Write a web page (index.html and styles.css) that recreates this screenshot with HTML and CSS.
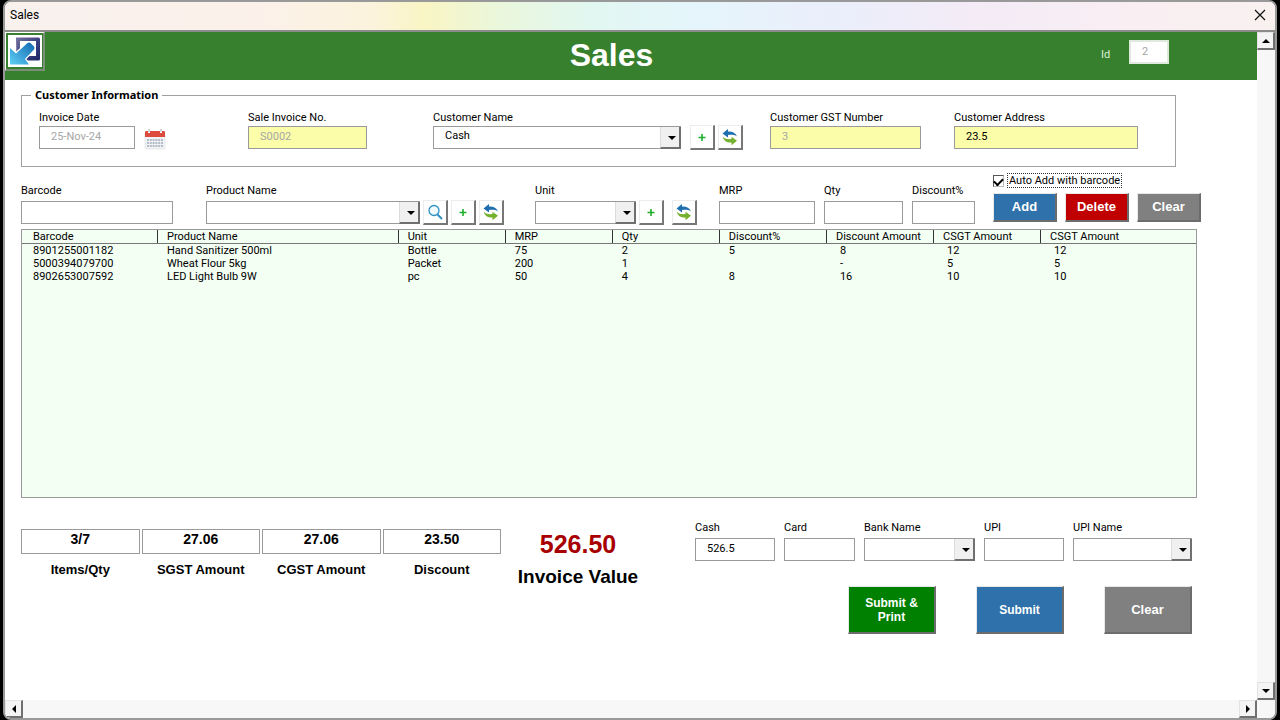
FILE: index.html
```html
<!DOCTYPE html>
<html lang="en">
<head>
<meta charset="utf-8">
<title>Sales</title>
<link rel="stylesheet" href="styles.css">
</head>
<body>
<svg class="defs" aria-hidden="true">
  <symbol id="refresh" viewBox="0 0 18 18">
    <path d="M1.500 5.500 7 1v2.400c4.600-.2 7.600 1.400 9 5C13.500 6.800 10.500 6.600 7 7v2.600z" fill="#1f6fae"/>
    <path d="M16 12.800 10.500 8.800v2.300c-4 .3-6.500-.2-8.700-2.400C2.600 12.800 6 14.800 10.500 14.600v2.600z" fill="#76b02f"/>
  </symbol>
  <symbol id="plus" viewBox="0 0 18 18">
    <path d="M9 6v7M5.500 9.500h7" stroke="#1fae2c" stroke-width="1.600"/>
  </symbol>
</svg>
<div class="window">
  <div class="titlebar">
    <span>Sales</span>
    <button class="close" type="button" aria-label="Close">
      <svg viewBox="0 0 12 12" width="12" height="12"><path d="M1 1l10 10M11 1L1 11" stroke="#111" stroke-width="1.200"/></svg>
    </button>
  </div>
  <div class="viewport">
    <form class="form">
      <header class="header">
        <button class="back" type="button" aria-label="Back">
          <svg viewBox="0 0 34 32" width="34" height="32">
            <defs>
              <linearGradient id="frame" x1="0" y1="0" x2="1" y2="1"><stop offset="0" stop-color="#77739f"/><stop offset=".5" stop-color="#3e4382"/><stop offset="1" stop-color="#1b2565"/></linearGradient>
              <linearGradient id="arrow" x1="1" y1="0" x2="0" y2="1"><stop offset="0" stop-color="#1268b0"/><stop offset="1" stop-color="#5fd0f5"/></linearGradient>
            </defs>
            <rect width="34" height="32" fill="#fff"/>
            <path d="M8 2.500h22.500a1.500 1.500 0 0 1 1.500 1.500v20a1.500 1.500 0 0 1-1.500 1.500H10a1.500 1.500 0 0 1-1.500-1.500zM12 6v15h16V6z" fill="url(#frame)" fill-rule="evenodd"/>
            <path d="M19.500 8q1.500-1 3 0l3.500 3.500q1 1.500 0 3L17 24l4 5.500H2V13l6 5.500z" fill="url(#arrow)" stroke="#fff" stroke-width="2.400" paint-order="stroke"/>
          </svg>
        </button>
        <h1 class="title">Sales</h1>
        <div class="record">
          <label for="rid">Id</label>
          <input id="rid" class="box record-id" value="2" disabled>
        </div>
      </header>

      <fieldset class="customer">
        <legend>Customer Information</legend>
        <div class="customer-fields">
          <div class="field">
            <label for="date">Invoice Date</label>
            <div class="line"><input id="date" class="box" value="25-Nov-24" disabled>
              <svg class="calendar" viewBox="0 0 22 22" width="22" height="22" role="img" aria-label="Calendar">
                <path d="M1 5h20v15a1 1 0 0 1-1 1H2a1 1 0 0 1-1-1z" fill="#f1f3f5" stroke="#dadddf" stroke-width=".6"/>
                <path d="M1 9V4q0-1 1-1h18q1 0 1 1v5z" fill="#dd4b3e"/>
                <path d="M5 1v4M17 1v4" stroke="#fff" stroke-width="2"/><path d="M5 1v3M17 1v3" stroke="#a8aaac" stroke-width="1"/>
                <path d="M3 12h16M3 15h16M3 18h16" stroke="#b3bcc8" stroke-width="2" stroke-dasharray="2 .8"/>
              </svg></div>
          </div>
          <div class="field">
            <label for="invno">Sale Invoice No.</label>
            <div class="line"><input id="invno" class="box yellow" value="S0002" disabled></div>
          </div>
          <div class="field">
            <label for="cust">Customer Name</label>
            <div class="line"><span class="drop"><select id="cust" class="box"><option>Cash</option></select></span>
              <button class="tool first" type="button" aria-label="Add customer"><svg><use href="#plus"/></svg></button>
              <button class="tool" type="button" aria-label="Refresh customers"><svg><use href="#refresh"/></svg></button></div>
          </div>
          <div class="field">
            <label for="gst">Customer GST Number</label>
            <div class="line"><input id="gst" class="box yellow" value="3" disabled></div>
          </div>
          <div class="field">
            <label for="addr">Customer Address</label>
            <div class="line"><input id="addr" class="box yellow" value="23.5"></div>
          </div>
        </div>
      </fieldset>

      <section class="entry">
        <div class="field">
          <label for="barcode">Barcode</label>
          <div class="line"><input id="barcode" class="box"></div>
        </div>
        <div class="field">
          <label for="product">Product Name</label>
          <div class="line"><span class="drop"><select id="product" class="box"><option></option></select></span>
            <button class="tool" type="button" aria-label="Search product"><svg viewBox="0 0 18 18"><circle cx="8" cy="7.500" r="5" fill="#f2fafd" stroke="#2f8fc0" stroke-width="1.300"/><path d="M11.500 11.500l4.500 4.500" stroke="#2f8fc0" stroke-width="2"/></svg></button>
            <button class="tool" type="button" aria-label="Add product"><svg><use href="#plus"/></svg></button>
            <button class="tool" type="button" aria-label="Refresh products"><svg><use href="#refresh"/></svg></button></div>
        </div>
        <div class="field">
          <label for="unit">Unit</label>
          <div class="line"><span class="drop"><select id="unit" class="box"><option></option></select></span>
            <button class="tool" type="button" aria-label="Add unit"><svg><use href="#plus"/></svg></button>
            <button class="tool apart" type="button" aria-label="Refresh units"><svg><use href="#refresh"/></svg></button></div>
        </div>
        <div class="field">
          <label for="mrp">MRP</label>
          <div class="line"><input id="mrp" class="box"></div>
        </div>
        <div class="field">
          <label for="qty">Qty</label>
          <div class="line"><input id="qty" class="box"></div>
        </div>
        <div class="field">
          <label for="disc">Discount%</label>
          <div class="line"><input id="disc" class="box"></div>
        </div>
        <div class="actions">
          <div class="auto">
            <input id="auto" type="checkbox" checked>
            <label for="auto">Auto Add with barcode</label>
          </div>
          <div class="action-row">
            <button class="btn blue" type="button">Add</button>
            <button class="btn red" type="button">Delete</button>
            <button class="btn gray" type="button">Clear</button>
          </div>
        </div>
      </section>

      <div class="list">
        <table>
          <thead>
            <tr><th class="code"><span>Barcode</span></th><th class="name"><span>Product Name</span></th><th class="std"><span>Unit</span></th><th class="std"><span>MRP</span></th><th class="std"><span>Qty</span></th><th class="std"><span>Discount%</span></th><th class="std"><span>Discount Amount</span></th><th class="std"><span>CSGT Amount</span></th><th><span>CSGT Amount</span></th></tr>
          </thead>
          <tbody>
            <tr><td>8901255001182</td><td>Hand Sanitizer 500ml</td><td>Bottle</td><td>75</td><td>2</td><td>5</td><td class="amount">8</td><td class="amount">12</td><td class="amount">12</td></tr>
            <tr><td>5000394079700</td><td>Wheat Flour 5kg</td><td>Packet</td><td>200</td><td>1</td><td></td><td class="amount">-</td><td class="amount">5</td><td class="amount">5</td></tr>
            <tr><td>8902653007592</td><td>LED Light Bulb 9W</td><td>pc</td><td>50</td><td>4</td><td>8</td><td class="amount">16</td><td class="amount">10</td><td class="amount">10</td></tr>
          </tbody>
        </table>
      </div>

      <section class="bottom">
        <div class="totals">
          <div class="total"><input id="items" class="box" value="3/7"><label for="items">Items/Qty</label></div>
          <div class="total"><input id="sgst" class="box" value="27.06"><label for="sgst">SGST Amount</label></div>
          <div class="total"><input id="cgst" class="box" value="27.06"><label for="cgst">CGST Amount</label></div>
          <div class="total"><input id="dtotal" class="box" value="23.50"><label for="dtotal">Discount</label></div>
        </div>
        <div class="invoice">
          <div class="invoice-value">526.50</div>
          <div class="invoice-label">Invoice Value</div>
        </div>
        <div class="payment">
          <div class="pay-fields">
            <div class="field"><label for="cash">Cash</label><div class="line"><input id="cash" class="box" value="526.5"></div></div>
            <div class="field"><label for="card">Card</label><div class="line"><input id="card" class="box"></div></div>
            <div class="field"><label for="bank">Bank Name</label><div class="line"><span class="drop"><select id="bank" class="box"><option></option></select></span></div></div>
            <div class="field"><label for="upi">UPI</label><div class="line"><input id="upi" class="box"></div></div>
            <div class="field"><label for="upiname">UPI Name</label><div class="line"><span class="drop"><select id="upiname" class="box"><option></option></select></span></div></div>
          </div>
          <div class="submit-row">
            <button class="btn green small" type="button">Submit &amp; Print</button>
            <button class="btn blue small" type="button">Submit</button>
            <button class="btn gray" type="button">Clear</button>
          </div>
        </div>
      </section>
    </form>
    <div class="vbar">
      <button class="scroll" type="button" aria-label="Scroll up"><svg viewBox="0 0 8 8"><path d="M0 6l4-4 4 4z"/></svg></button>
      <button class="scroll" type="button" aria-label="Scroll down"><svg viewBox="0 0 8 8"><path d="M0 2l4 4 4-4z"/></svg></button>
    </div>
    <div class="hbar">
      <button class="scroll" type="button" aria-label="Scroll left"><svg viewBox="0 0 8 8"><path d="M6 0L2 4l4 4z"/></svg></button>
      <button class="scroll" type="button" aria-label="Scroll right"><svg viewBox="0 0 8 8"><path d="M2 0l4 4-4 4z"/></svg></button>
    </div>
  </div>
</div>
</body>
</html>
```
FILE: styles.css
```css
* { box-sizing: border-box; }
body {
  margin: 0;
  padding: 0 3px;
  background: #000;
  color: #000;
  font: 11px/14px Roboto, sans-serif;
}
button, input, select { font: inherit; color: inherit; margin: 0; padding: 0; border-radius: 0; }
.defs { position: absolute; width: 0; height: 0; }

.window {
  display: flex;
  flex-direction: column;
  min-height: 100vh;
  background: #fff;
  border: 2px solid #999;
  border-radius: 8px;
  overflow: hidden;
}
.titlebar {
  display: flex;
  justify-content: space-between;
  align-items: center;
  height: 30px;
  padding: 0 7px 2px 5px;
  border-bottom: 2px solid #8b8b8b;
  font-size: 12px;
  background: linear-gradient(90deg, #f9f1ee 0%, #fbf1ea 20%, #fbf3dc 29%, #f9f5c4 33%, #eaf7dc 39%, #e2f7f1 46%, #e5f5fb 54%, #ebeefb 66%, #f5ebf6 78%, #f9eff2 90%, #f9f0f0 100%);
}
.close { display: grid; place-items: center; width: 16px; height: 16px; border: 0; background: none; }

.viewport { flex: 1; display: grid; grid-template: 1fr 18px / minmax(0, 1fr) 18px; background: #f7f7f7; }
.form { padding-bottom: 24px; background: #fff; }
.vbar { display: flex; flex-direction: column; justify-content: space-between; }
.hbar { display: flex; justify-content: space-between; }
.scroll {
  display: grid;
  place-items: center;
  width: 18px;
  height: 18px;
  background: #f4f4f4;
  border: 1px solid #e3e3e3;
  border-right: 2px solid #707070;
  border-bottom: 2px solid #707070;
}
.scroll svg { width: 8px; height: 8px; }

.header {
  display: grid;
  grid-template-columns: 117px 1fr 156px;
  height: 48px;
  background: #37802d;
}
.back {
  display: grid;
  place-items: center;
  width: 40px;
  height: 39px;
  background: #37802d;
  border: 1px solid #fff;
  border-right: 2px solid #7d8d7b;
  border-bottom: 2px solid #7d8d7b;
}
.title {
  margin: 0;
  color: #fff;
  text-align: center;
  font: bold 32px/46px "Liberation Sans", sans-serif;
}
.record { display: flex; align-items: center; gap: 16px; height: 40px; padding-right: 88px; color: #dff0dc; }
.record label { flex: 1; padding-top: 6px; }
.record .record-id { width: 40px; height: 24px; border: 2px solid #dfe9dd; }

.box {
  width: 100%;
  height: 23px;
  min-width: 0;
  padding: 0 11px 2px;
  border: 1px solid #9a9a9a;
  background: #fff;
  appearance: none;
}
.box:disabled { color: #a6a6a6; opacity: 1; }
.box.yellow { background: #fbfda9; }
.drop { position: relative; flex: 1; min-width: 0; display: flex; }
.drop::before {
  content: "";
  position: absolute;
  right: 0;
  top: 1px;
  bottom: 0;
  width: 18px;
  background: #f0f0f0;
  border-left: 1px solid #dcdcdc;
  border-right: 2px solid #707070;
  border-bottom: 2px solid #707070;
  pointer-events: none;
}
.drop::after {
  content: "";
  position: absolute;
  right: 5px;
  top: 10px;
  border: 4px solid transparent;
  border-top-color: #000;
  border-bottom-width: 0;
  pointer-events: none;
}
.field { display: flex; flex-direction: column; white-space: nowrap; min-width: 0; }
.line { display: flex; align-items: center; height: 24px; gap: 3px; }
.tool {
  flex: none;
  display: grid;
  place-items: center;
  width: 25px;
  height: 25px;
  background: #fff;
  border: 1px solid #ececec;
  border-right: 2px solid #777;
  border-bottom: 2px solid #777;
}
.tool svg { width: 18px; height: 18px; fill: none; }

.customer {
  margin: 7px 81px 0 16px;
  padding: 8px 37px 17px 17px;
  border: 1px solid #a0a0a0;
  min-width: 0;
}
.customer legend { margin-left: -8px; padding: 0 4px; font: bold 11px/16px "Noto Sans", sans-serif; }
.customer-fields { display: grid; grid-template-columns: 209fr 185fr 337fr 184fr 184fr; }
.customer-fields .field:nth-child(1) { padding-right: 82px; }
.customer-fields .field:nth-child(1) .line { gap: 9px; }
.calendar { flex: none; margin-top: 3px; }
.customer-fields .field:nth-child(2) { padding-right: 66px; }
.customer-fields .field:nth-child(3) { padding-right: 27px; }
.customer-fields .field:nth-child(4) { padding-right: 33px; }
.tool.first { margin-left: 6px; }

.entry {
  display: grid;
  grid-template-columns: 185fr 329fr 184fr 105fr 88fr 81fr 208fr;
  align-items: end;
  margin: 7px 56px 0 16px;
}
.entry .field { gap: 2px; }
.entry .field:nth-child(1) { padding-right: 33px; }
.entry .field:nth-child(2) { padding-right: 31px; }
.entry .field:nth-child(3) { padding-right: 22px; }
.entry .field:nth-child(4) { padding-right: 9px; }
.entry .field:nth-child(5) { padding-right: 9px; }
.entry .field:nth-child(6) { padding-right: 18px; }
.tool.apart { margin-left: 5px; }
.actions { display: flex; flex-direction: column; gap: 6px; }
.auto { display: flex; align-items: center; gap: 4px; }
.auto label { outline: 1px dotted #333; padding: 0 1px; line-height: 13px; white-space: nowrap; }
.auto input {
  appearance: none;
  display: grid;
  place-items: center;
  width: 11px;
  height: 12px;
  border: 1px solid #bbb;
  border-top-color: #555;
  border-left-color: #555;
  background: #fff;
}
.auto input:checked::before {
  content: "";
  width: 7px;
  height: 4px;
  border-left: 2px solid #000;
  border-bottom: 2px solid #000;
  transform: rotate(-45deg);
}
.action-row { display: grid; grid-template-columns: repeat(3, 1fr); gap: 8px; margin-bottom: 2px; }
.action-row .btn { height: 29px; }
.btn {
  color: #fff;
  font: bold 13px/14px "Liberation Sans", sans-serif;
  border: 1px solid #e8e8e8;
  border-right: 2px solid #6c6c6c;
  border-bottom: 2px solid #6c6c6c;
}
.small { font-size: 12px; }
.blue { background: #2f71aa; }
.red { background: #c00000; }
.gray { background: #808080; }
.green { background: #008000; }

.list {
  margin: 5px 60px 0 16px;
  min-height: 269px;
  background: #f4fff4;
  border: 1px solid #999;
}
table { width: 100%; table-layout: fixed; border-collapse: collapse; white-space: nowrap; }
th, td { padding: 0 0 0 10px; text-align: left; font-weight: normal; line-height: 13px; height: 13px; }
th { padding: 0; border-bottom: 1px solid #777; }
th span { display: block; padding-left: 9px; border-left: 1px solid #333; }
th:first-child span { border-left: 0; padding-left: 11px; }
td:first-child { padding-left: 11px; }
.amount { padding-left: 14px; }
.code { width: 11.5%; }
.name { width: 20.5%; }
.std { width: 9.12%; }

.bottom {
  display: grid;
  grid-template-columns: 480fr 194fr 497fr;
  margin: 23px 65px 0 16px;
}
.totals { display: grid; grid-template-columns: repeat(4, 1fr); gap: 2px; padding-top: 8px; align-content: start; }
.total {
  display: flex;
  flex-direction: column;
  gap: 8px;
  text-align: center;
  white-space: nowrap;
  font: bold 13px/16px "Liberation Sans", sans-serif;
}
.total .box { height: 25px; padding: 0 4px 6px; text-align: center; font-size: 14px; }
.invoice { padding: 8px 40px 0 0; text-align: center; white-space: nowrap; font: bold 19px/30px "Liberation Sans", sans-serif; }
.invoice-value { color: #a80000; font-size: 25px; }
.invoice-label { line-height: 36px; }
.pay-fields { display: grid; grid-template-columns: 80fr 71fr 111fr 80fr 119fr; column-gap: 9px; }
.pay-fields .field { gap: 2px; }
.submit-row { display: flex; justify-content: flex-end; gap: 40px; margin-top: 25px; }
.submit-row .btn { width: 88px; height: 48px; padding: 0 12px; }
```
